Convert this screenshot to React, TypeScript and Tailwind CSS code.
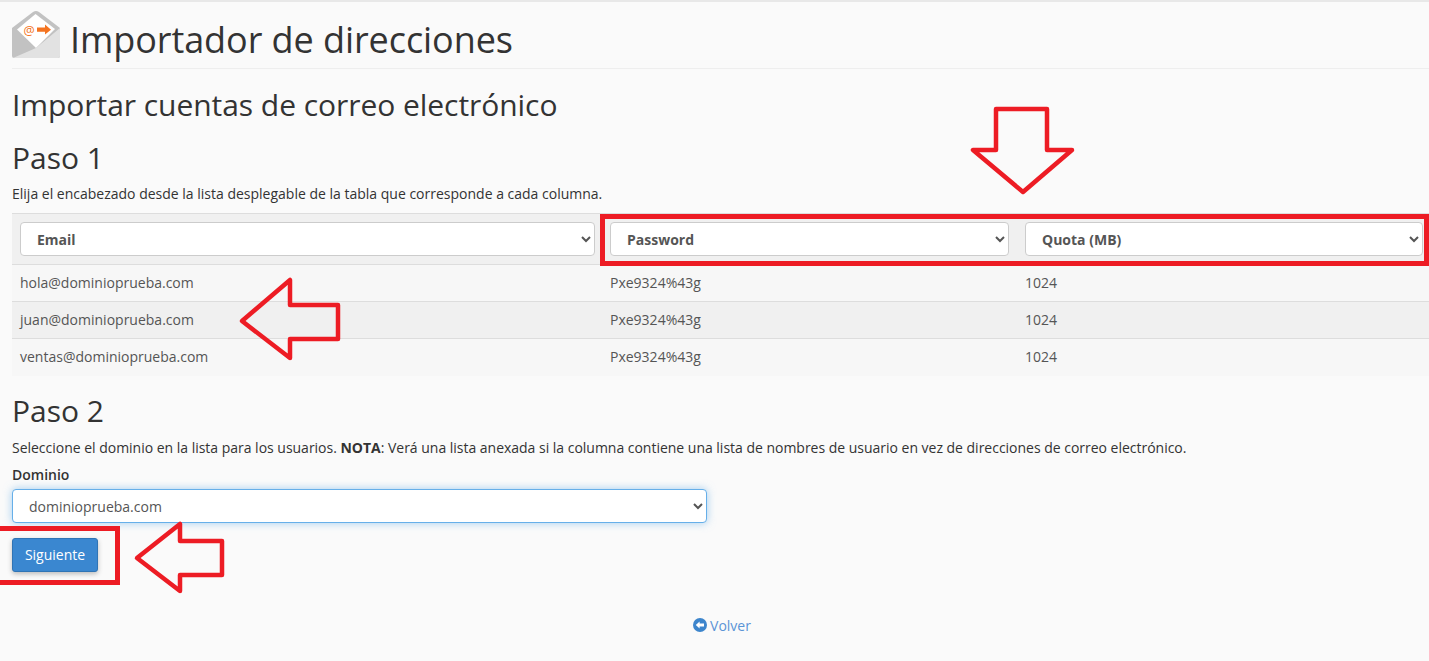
const FONT = "font-['Open_Sans',sans-serif]";

const RED = '#ed1c24';

const rows = [
  { email: 'hola@dominioprueba.com', password: 'Pxe9324%43g', quota: '1024' },
  { email: 'juan@dominioprueba.com', password: 'Pxe9324%43g', quota: '1024' },
  { email: 'ventas@dominioprueba.com', password: 'Pxe9324%43g', quota: '1024' },
];

function MailIcon() {
  return (
    <svg width="48" height="48" viewBox="0 0 48 48" className="mt-[9px] shrink-0">
      <path d="M0 17 L21 1 Q24 -1 27 1 L48 17 V45 Q48 47 46 47 H2 Q0 47 0 45 Z" fill="#c2c2c2" />
      <path d="M5 18.5 L23.5 3 L43 18 L24 37 Z" fill="#ffffff" />
      <path d="M1 47 L24 37 L48 17 V45 Q48 47 46 47 Z" fill="#e2e2e2" />
      <text x="17" y="23.5" textAnchor="middle" fontSize="12.5" fill="#f47421" fontFamily="'Open Sans',sans-serif">@</text>
      <path d="M25 16.5 H33 V13.5 L39 18.7 L33 23.5 V20.8 H25 Z" fill="#f47421" />
    </svg>
  );
}

function ArrowOutline({ className, points, w, h }: { className: string; points: string; w: number; h: number }) {
  return (
    <svg className={`absolute ${className}`} width={w} height={h} viewBox={`0 0 ${w} ${h}`}>
      <polygon points={points} fill="none" stroke={RED} strokeWidth="4.5" strokeLinejoin="round" />
    </svg>
  );
}

function HeaderSelect({ label }: { label: string }) {
  return (
    <select
      defaultValue={label}
      className="block w-full h-[34px] rounded border border-[#cccccc] bg-white pl-[12px] pr-[8px] text-[14px] font-bold text-[#555555]"
    >
      <option>{label}</option>
    </select>
  );
}

export default function App() {
  return (
    <div className={`relative min-h-[661px] overflow-hidden bg-[#fafafa] text-[#333333] ${FONT}`}>
      <div className="h-[2px] bg-[#e8e8e8]" />

      {/* Header */}
      <div className="ml-[12px] flex h-[67px] items-start gap-[10px] border-b border-[#eeeeee]">
        <MailIcon />
        <h1 className="mt-[20px] text-[36px] leading-[36px] font-normal tracking-[-0.07px] text-[#333333]">Importador de direcciones</h1>
      </div>

      <div className="pl-[12px]">
        <h2 className="mt-[18px] text-[30px] leading-[36px] font-normal tracking-[-0.05px]">Importar cuentas de correo electrónico</h2>

        <h3 className="mt-[17px] text-[30px] leading-[36px] font-normal">Paso 1</h3>
        <p className="mt-[9px] text-[14px] leading-[18px]">
          Elija el encabezado desde la lista desplegable de la tabla que corresponde a cada columna.
        </p>

        {/* Mapping table */}
        <table className="mt-[10px] w-[1418px] table-fixed border-collapse text-[14px] text-[#555555]">
          <colgroup>
            <col className="w-[590px]" />
            <col className="w-[415px]" />
            <col />
          </colgroup>
          <thead>
            <tr className="h-[51px] border-t border-b border-[#dddddd] bg-[#f0f0f0]">
              <th className="pl-[8px] pr-[7px] font-bold">
                <HeaderSelect label="Email" />
              </th>
              <th className="pl-[8px] pr-[8px] font-bold">
                <HeaderSelect label="Password" />
              </th>
              <th className="pl-[8px] pr-[7px] font-bold">
                <HeaderSelect label="Quota (MB)" />
              </th>
            </tr>
          </thead>
          <tbody>
            {rows.map((row, i) => (
              <tr key={row.email} className={`h-[37px] border-b border-[#dddddd] last:border-b-0 ${i === 1 ? 'bg-[#f0f0f0]' : 'bg-[#f7f7f7]'}`}>
                <td className="px-[8px] pb-[2px]">{row.email}</td>
                <td className="px-[8px] pb-[2px]">{row.password}</td>
                <td className="px-[8px] pb-[2px]">{row.quota}</td>
              </tr>
            ))}
          </tbody>
        </table>

        <h3 className="mt-[17px] text-[30px] leading-[36px] font-normal">Paso 2</h3>
        <p className="mt-[10px] text-[14px] leading-[18px] tracking-[-0.016px]">
          Seleccione el dominio en la lista para los usuarios. <strong>NOTA</strong>: Verá una lista anexada si la columna contiene una lista de nombres de usuario en vez de direcciones de correo electrónico.
        </p>

        <label className="mt-[9px] block text-[14px] leading-[18px] font-semibold">Dominio</label>
        <select
          defaultValue="dominioprueba.com"
          className="mt-[5px] block h-[34px] w-[695px] rounded border border-[#66afe9] bg-white pt-[2px] pl-[12px] pr-[8px] text-[14px] text-[#555555] shadow-[0_0_8px_rgba(102,175,233,0.6)]"
        >
          <option>dominioprueba.com</option>
        </select>

        <button className="mt-[15px] block h-[34px] w-[86px] rounded-[3px] border border-[#2f74b5] bg-[#3a87d0] text-[14px] text-white shadow-[0_2px_5px_rgba(0,0,0,0.25)]">
          Siguiente
        </button>
      </div>

      <div className="mt-[43px] flex items-center justify-center gap-[3px] pl-[15px] text-[14px] text-[#5b94d6]">
        <svg width="14" height="14" viewBox="0 0 14 14">
          <circle cx="7" cy="7" r="7" fill="#3d85cc" />
          <path d="M2.8 7 L6.6 3.4 V5.6 H11 V8.4 H6.6 V10.6 Z" fill="#ffffff" />
        </svg>
        <span>Volver</span>
      </div>

      {/* Red annotations drawn over the screenshot */}
      <div className="absolute left-[600px] top-[214px] h-[52px] w-[829px] border-[5px] border-[#ed1c24]" />
      <div className="absolute left-[-10px] top-[526px] h-[59px] w-[130px] border-[5px] border-[#ed1c24]" />
      <ArrowOutline
        className="left-[968px] top-[104px]"
        w={110}
        h={92}
        points="28,5 79,5 79,46 104,46 55,88 5,46 28,46"
      />
      <ArrowOutline
        className="left-[238px] top-[275px]"
        w={105}
        h={90}
        points="52,5 52,30 100,30 100,64 52,64 52,83 4,46"
      />
      <ArrowOutline
        className="left-[133px] top-[519px]"
        w={95}
        h={78}
        points="47,5 47,22 89,22 89,56 47,56 47,72 4,39"
      />
    </div>
  );
}
